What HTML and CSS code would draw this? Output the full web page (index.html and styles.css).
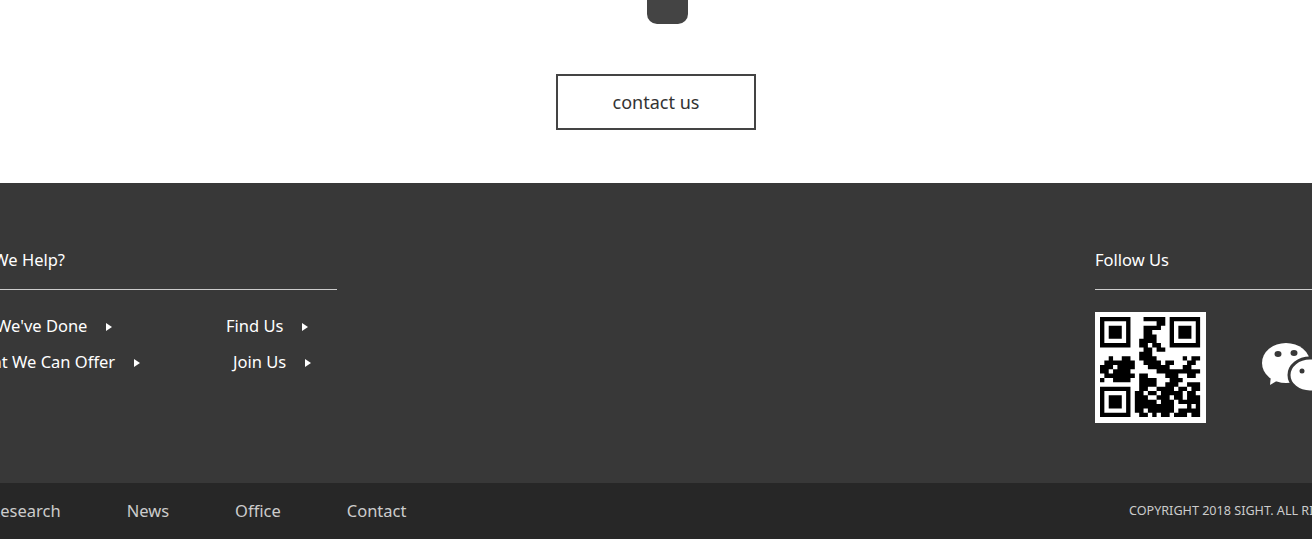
FILE: index.html
```html
<!DOCTYPE html>
<html lang="en">
<head>
  <meta charset="UTF-8" />
  <title>Sight</title>
  <link rel="stylesheet" href="styles.css">
</head>
<body>

<section class="contact">
  <div class="tab"></div>
  <a class="contact-btn" href="#">contact us</a>
</section>

<footer class="footer">
  <div class="footer-main">
    <div class="footer-inner">
      <div class="help">
        <h4>How Can We Help?</h4>
        <div class="help-links">
          <ul class="links-a">
            <li class="done"><a href="#">What We've Done</a></li>
            <li class="offer"><a href="#">What We Can Offer</a></li>
          </ul>
          <ul class="links-b">
            <li><a href="#">Find Us</a></li>
            <li class="join"><a href="#">Join Us</a></li>
          </ul>
        </div>
      </div>
      <div class="follow">
        <h4>Follow Us</h4>
        <div class="follow-row">
          <svg class="qr" viewBox="-1.15 -1.15 25.5 25.5" width="111" height="111">
            <rect x="-1.15" y="-1.15" width="25.5" height="25.5" fill="#fff"/>
            <path fill="none" stroke="#000" d="M.5 .5h6v6h-6zM16.5 .5h6v6h-6zM.5 16.5h6v6h-6z"/>
            <path d="M2 2h3v3h-3zM18 2h3v3h-3zM2 18h3v3h-3z"/>
            <path fill="none" stroke="#000" d="
              M10 .5h5
              M13 1.5h2
              M10 2.5h4
              M10 3.5h2
              M10 4.5h3
              M9 5.5h4
              M9 6.5h2M12 6.5h2
              M10 7.5h2M13 7.5h2
              M9 8.5h3
              M2 9.5h1M5 9.5h2M9 9.5h4M19 9.5h1M21 9.5h2
              M1 10.5h7M10 10.5h4M15 10.5h2M20 10.5h2
              M0 11.5h3M4 11.5h4M11 11.5h5M19 11.5h2
              M0 12.5h2M3 12.5h4M13 12.5h10
              M1 13.5h7M9 13.5h2M15 13.5h3M20 13.5h2
              M0 14.5h1M3 14.5h4M9 14.5h4M16 14.5h3
              M9 15.5h4M15 15.5h3M20 15.5h3
              M9 16.5h2M13 16.5h4M18 16.5h2M21 16.5h2
              M8 17.5h2M11 17.5h2M14 17.5h5M20 17.5h2
              M8 18.5h3M13 18.5h3M17 18.5h2M20 18.5h3
              M8 19.5h5M14 19.5h3M18 19.5h5
              M8 20.5h9M20 20.5h1M22 20.5h1
              M8 21.5h2M11 21.5h6M18 21.5h5
              M9 22.5h2M12 22.5h1M14 22.5h2M17 22.5h3M21 22.5h2"/>
          </svg>
          <svg class="wechat" viewBox="0 0 72 54" width="72" height="54">
            <ellipse cx="25" cy="22" rx="24" ry="20" fill="#fff"/>
            <path fill="#fff" d="M10 34l-1 10 10-6z"/>
            <ellipse cx="17" cy="13" rx="3.5" ry="3" fill="#383838"/>
            <ellipse cx="33" cy="12" rx="3.5" ry="3" fill="#383838"/>
            <ellipse cx="49" cy="34" rx="21" ry="17" fill="#fff" stroke="#383838" stroke-width="3"/>
            <circle cx="41" cy="30" r="2.5" fill="#383838"/>
          </svg>
        </div>
      </div>
    </div>
  </div>
  <div class="footer-bar">
    <div class="footer-inner bar-inner">
      <nav class="bar-nav">
        <a href="#">Research</a>
        <a href="#">News</a>
        <a href="#">Office</a>
        <a href="#">Contact</a>
      </nav>
      <p class="copyright">COPYRIGHT 2018 SIGHT. ALL RIGHTS RESERVED.</p>
    </div>
  </div>
</footer>

</body>
</html>
```

FILE: styles.css
```css
body {
  margin: 0;
  height: 539px;
  overflow: hidden;
  font-family: "Noto Sans", "Open Sans", sans-serif;
  background: #fff;
}
.contact {
  height: 183px;
  display: flex;
  flex-direction: column;
  align-items: center;
}
.tab {
  width: 41px;
  height: 24px;
  margin-left: 23px;
  margin-bottom: 50px;
  background: #444;
  border-radius: 0 0 10px 10px;
}
.contact-btn {
  width: 196px;
  height: 52px;
  line-height: 52px;
  border: 2px solid #444;
  text-align: center;
  font-size: 18px;
  color: #333;
  text-decoration: none;
}
.footer-main {
  height: 300px;
  background: #383838;
}
/* wider than the window, centred on it */
.footer-inner {
  width: 1500px;
  margin-left: -94px;
  display: flex;
  justify-content: space-between;
}
.help {
  width: 431px;
}
.follow {
  width: 311px;
}
.footer h4 {
  margin: 0;
  height: 107px;
  padding-top: 64px;
  box-sizing: border-box;
  font-weight: normal;
  font-size: 16.5px;
  line-height: 26px;
  color: #fff;
  border-bottom: 1px solid #ccc;
}
.help h4 {
  padding-left: 14px;
}
.help-links {
  display: flex;
}
.help-links ul {
  list-style: none;
  margin: 18px 0 0;
  padding: 0;
}
.help-links li {
  height: 36px;
  line-height: 36px;
  font-size: 16.5px;
  white-space: nowrap;
}
.help-links a {
  color: #fff;
  text-decoration: none;
}
.help-links a::after {
  content: "";
  display: inline-block;
  margin-left: 19px;
  vertical-align: 1px;
  border-left: 6px solid #fff;
  border-top: 4px solid transparent;
  border-bottom: 4px solid transparent;
}
.links-a {
  width: 320px;
}
.done {
  padding-left: 45px;
}
.offer {
  padding-left: 61px;
}
.join {
  padding-left: 7px;
}
.follow-row {
  display: flex;
  margin-top: 22px;
}
.wechat {
  margin: 29px 0 0 55px;
}
.footer-bar {
  height: 56px;
  background: #272727;
}
.bar-inner {
  height: 100%;
  align-items: center;
}
.bar-nav {
  display: flex;
  gap: 66px;
  margin-left: 84px;
  margin-bottom: 2px;
  font-size: 16.5px;
}
.bar-nav a {
  color: #ccc;
  text-decoration: none;
}
.copyright {
  margin: 0 0 2px;
  width: 277px;
  white-space: nowrap;
  font-size: 12.6px;
  color: #ccc;
}
```
